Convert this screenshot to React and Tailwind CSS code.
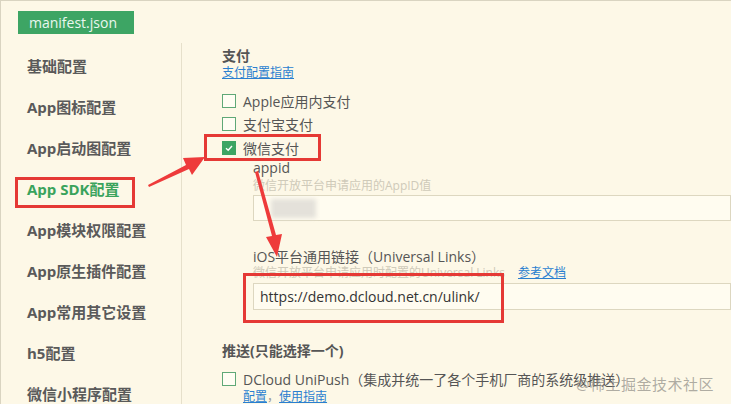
import React from "react";

const font = { fontFamily: '"Open Sans", "Noto Sans CJK SC", sans-serif' };

function Box({ checked }) {
  return checked ? (
    <span className="w-[14px] h-[14px] bg-[#3da564] border border-[#3da564] flex items-center justify-center shrink-0">
      <svg width="10" height="10" viewBox="0 0 10 10">
        <path d="M2 5.2 L4.2 7.2 L8 3" stroke="#fff" strokeWidth="1.4" fill="none" />
      </svg>
    </span>
  ) : (
    <span className="w-[14px] h-[14px] border border-[#5fa877] bg-[#fffdf3] shrink-0" />
  );
}

function Check({ label, checked, children }) {
  return (
    <div className="relative flex items-center gap-[7px] h-[20px] text-[14px] text-[#555]">
      <Box checked={checked} />
      <span>{label}</span>
      {children}
    </div>
  );
}

const side = [
  "基础配置",
  "App图标配置",
  "App启动图配置",
  "App SDK配置",
  "App模块权限配置",
  "App原生插件配置",
  "App常用其它设置",
  "h5配置",
  "微信小程序配置",
];

export default function App() {
  return (
    <div
      style={font}
      className="relative w-[731px] h-[404px] overflow-hidden bg-[#fdf8e7] border-t border-l border-[#d9d4c1]"
    >
      <div className="h-[42px] pt-[10px] pl-[17px]">
        <div className="w-[116px] h-[23px] bg-[#3da564] text-[#e9f7ee] text-[14px] leading-[23px] pl-[11px]">
          manifest.json
        </div>
      </div>
      <div className="flex">
        <div className="w-[181px] h-[400px] border-r border-[#e6e0cb] pt-[3px]">
          {side.map((s, i) => (
            <div
              key={s}
              className={`relative h-[41px] flex items-center pl-[26px] text-[15px] font-bold ${
                i === 3 ? "text-[#3aa35c]" : "text-[#5a5a5a]"
              }`}
            >
              {s}
              {i === 3 && (
                <div className="absolute left-[14px] top-[8px] w-[120px] h-[31px] border-[3px] border-[#e53935]" />
              )}
            </div>
          ))}
        </div>
        <div className="flex-1 pl-[40px] pt-[4px] text-[#555]">
          <div className="text-[14px] font-bold leading-[18px]">支付</div>
          <div className="text-[12px] leading-[16px] text-[#2a7fd0] underline">支付配置指南</div>
          <div className="mt-[10px] flex flex-col gap-[3px]">
            <Check label="Apple应用内支付" />
            <Check label="支付宝支付" />
            <div className="mt-[1px]">
              <Check label="微信支付" checked>
                <div className="absolute left-[-18px] top-[-4px] w-[117px] h-[27px] border-[3px] border-[#e53935]" />
              </Check>
            </div>
          </div>
          <div className="pl-[31px]">
            <div className="mt-[1px] text-[14px] leading-[18px]">appid</div>
            <div className="mt-[1px] text-[12px] leading-[16px] text-[#cfcab9]">微信开放平台申请应用的AppID值</div>
            <div className="mt-[1px] h-[26px] border border-[#ddd7c0] bg-[#fffcf0] flex items-center pl-[17px]">
              <div className="w-[45px] h-[19px] bg-[#e4e1da] blur-[2px]" />
            </div>
            <div className="mt-[28px] text-[14px] leading-[16px]">iOS平台通用链接（Universal Links）</div>
            <div className="relative text-[12px] leading-[16px] text-[#cfcab9] flex">
              <span>微信开放平台申请应用时配置的Universal Links</span>
              <span className="ml-[13px] text-[#2a7fd0] underline">参考文档</span>
            </div>
            <div className="relative mt-[2px] h-[27px] border border-[#ddd7c0] bg-[#fffcf0] flex items-center pl-[6px] text-[14px] text-[#333]">
              https://demo.dcloud.net.cn/ulink/
              <div className="absolute left-[-11px] top-[-11px] w-[261px] h-[50px] border-[3px] border-[#e53935]" />
            </div>
          </div>
          <div className="mt-[32px] text-[14px] font-bold leading-[18px]">推送(只能选择一个)</div>
          <div className="mt-[9px]">
            <Check label="DCloud UniPush（集成并统一了各个手机厂商的系统级推送）" />
          </div>
          <div className="pl-[21px] text-[12px] leading-[16px] text-[#2a7fd0]">
            <span className="underline">配置</span>
            <span className="text-[#999]">，</span>
            <span className="underline">使用指南</span>
          </div>
        </div>
      </div>

      <svg className="absolute left-0 top-0 pointer-events-none" width="731" height="404">
        <polygon points="147,184 185,164 182,157 204,156 191,174 188,168 148,186" fill="#ee3b3b" />
        <polygon points="254,171 271,235 265,236 276,256 281,233 275,234 257,170" fill="#ee3b3b" />
      </svg>

      <div className="absolute left-[575px] top-[372px] text-[15px] text-[#8c8a84]/70 tracking-[0.5px]">
        @稀土掘金技术社区
      </div>
    </div>
  );
}
